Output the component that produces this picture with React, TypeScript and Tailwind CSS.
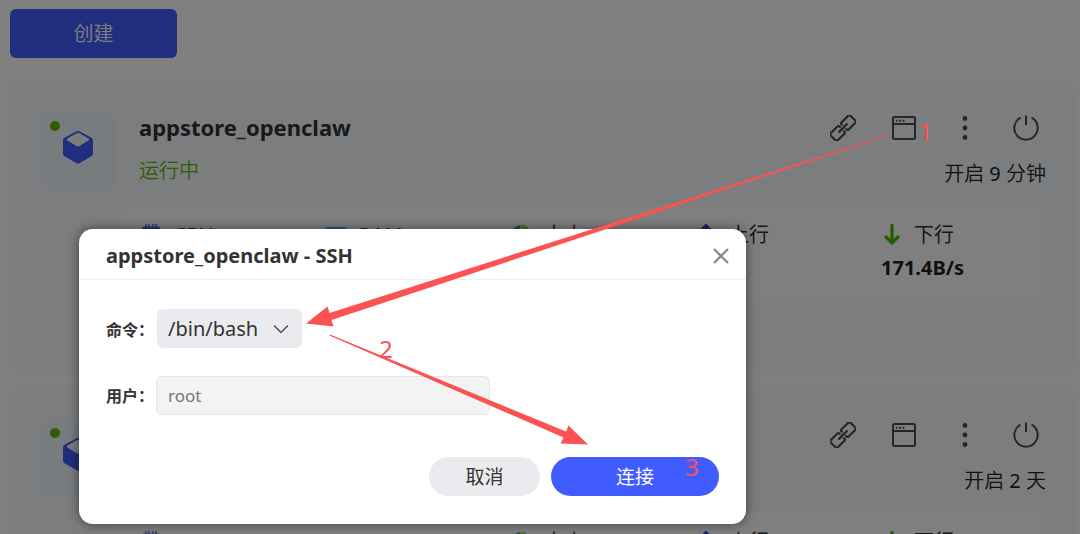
import type { ReactNode } from 'react';

interface Container {
  name: string;
  status: string;
  uptime: number;
  uptimeUnit: string;
  upload: string;
  download: string;
}

const containers: Container[] = [
  {
    name: 'appstore_openclaw',
    status: '运行中',
    uptime: 9,
    uptimeUnit: '分钟',
    upload: '0B/s',
    download: '171.4B/s'
  },
  {
    name: 'appstore_nginx',
    status: '运行中',
    uptime: 2,
    uptimeUnit: '天',
    upload: '0B/s',
    download: '0B/s'
  }
];

function CubeIcon() {
  return (
    <svg viewBox="0 0 30 34" className="h-[34px] w-[30px]" aria-hidden="true">
      <path
        d="M13.600 1.300a3 3 0 0 1 2.800 0l12 6.400A3 3 0 0 1 30 10.300v13.400a3 3 0 0 1-1.600 2.600l-12 6.900a3 3 0 0 1-2.800 0l-12-6.900A3 3 0 0 1 0 23.700V10.300a3 3 0 0 1 1.600-2.600z"
        fill="#405cff"
      />
      <path d="M14 3a2 2 0 0 1 2 0l9.500 5.600c1 .6 1 1.400 0 2L16.500 16a3 3 0 0 1-3 0L4.500 10.600c-1-.6-1-1.400 0-2z" fill="#f6f9ff" />
    </svg>
  );
}

function LinkIcon() {
  return (
    <svg viewBox="0 0 26 26" className="size-[26px]" fill="none" stroke="currentColor" strokeWidth="2.200" strokeLinejoin="round" strokeLinecap="round" aria-hidden="true">
      <g transform="rotate(-45 13 13)">
        <path d="M11.500 10V9.500A1.500 1.500 0 0 0 10 8H.5A1.500 1.500 0 0 0-1 9.500v7A1.500 1.500 0 0 0 .5 18H10a1.500 1.500 0 0 0 1.500-1.500V16" />
        <path d="M14.500 10V9.500A1.500 1.500 0 0 1 16 8h9.500A1.500 1.500 0 0 1 27 9.500v7a1.500 1.500 0 0 1-1.500 1.500H16a1.500 1.500 0 0 1-1.500-1.500V16" />
        <path d="M7.500 13h11" />
      </g>
    </svg>
  );
}

function WindowIcon() {
  return (
    <svg viewBox="0 0 24 24" className="size-6" fill="none" stroke="currentColor" strokeWidth="2" aria-hidden="true">
      <rect x="1" y="1" width="22" height="22" rx="1.500" />
      <path d="M1 8h22" />
      <path d="M3.800 4.700h1.800M7.200 4.700H9M10.600 4.700h1.800" />
    </svg>
  );
}

function MoreIcon() {
  return (
    <svg viewBox="0 0 24 24" className="size-6" fill="currentColor" aria-hidden="true">
      <circle cx="12" cy="2.500" r="2.400" />
      <circle cx="12" cy="12" r="2.400" />
      <circle cx="12" cy="21.500" r="2.400" />
    </svg>
  );
}

function PowerIcon() {
  return (
    <svg viewBox="0 0 26 26" className="size-[26px]" fill="none" stroke="currentColor" strokeWidth="2" aria-hidden="true">
      <path d="M13 .5v9.500M7.500 2.700a11.700 11.700 0 1 0 11 0" />
    </svg>
  );
}

function CpuIcon() {
  return (
    <svg viewBox="0 0 20 22" className="h-[22px] w-5" aria-hidden="true">
      <path d="M5 0v3M8 0v3M12 0v3M15 0v3M5 19v3M8 19v3M12 19v3M15 19v3" stroke="#405cff" strokeWidth="1.200" />
      <rect x="1" y="2.500" width="18" height="17" rx="2" fill="#3f74e8" />
      <rect x="6" y="7" width="8" height="8" fill="#fff" />
    </svg>
  );
}

function RamIcon() {
  return (
    <svg viewBox="0 0 20 22" className="h-[22px] w-5" aria-hidden="true">
      <rect x="0" y="3" width="20" height="15" rx="1" fill="#45b4f5" />
      <path d="M4 8v5M8 8v5M12 8v5M16 8v5" stroke="#fff" strokeWidth="2" />
    </svg>
  );
}

function DiskIcon() {
  return (
    <svg viewBox="0 0 20 22" className="h-[22px] w-5" aria-hidden="true">
      <circle cx="10" cy="11" r="10" fill="#2bb673" />
      <path d="M10 11V1a10 10 0 0 1 9.500 13z" fill="#a5d73c" />
      <path d="M10 1v10l9.500 3" stroke="#fff" fill="none" />
    </svg>
  );
}

function UpIcon() {
  return (
    <svg viewBox="0 0 20 22" className="h-[22px] w-5" fill="none" stroke="#3a3df0" strokeWidth="3.500" strokeLinecap="round" aria-hidden="true">
      <path d="M10 20V2M4 8l6-6 6 6" />
    </svg>
  );
}

function DownIcon() {
  return (
    <svg viewBox="0 0 20 22" className="h-[22px] w-5" fill="none" stroke="#46b800" strokeWidth="3.200" strokeLinecap="round" aria-hidden="true">
      <path d="M11 1.500v17M5 13l6 6 6-6" />
    </svg>
  );
}

function Stat({ icon, label, value }: { icon: ReactNode; label: string; value: string }) {
  return (
    <div className="w-[185px] shrink-0 last:w-auto last:shrink">
      <p className="flex h-7 items-center gap-[13px] text-[20px] text-[#333]">
        {icon}
        {label}
      </p>
      <p className="mt-[3px] text-[20px] leading-8 font-bold text-[#222]">{value}</p>
    </div>
  );
}

function ContainerCard({ item }: { item: Container }) {
  return (
    <section className="rounded-xl bg-[#f6fafe] pt-[31px] pr-[29px] pb-[71px] pl-[30px]">
      <div className="flex">
        <div className="flex h-[76px] w-[76px] shrink-0 rounded-xl bg-[#f1f8ff] pt-2">
          <span className="ml-[10px] size-[10px] rounded-full bg-[#64b800]" />
          <span className="mt-[9px] ml-[3px]">
            <CubeIcon />
          </span>
        </div>
        <div className="ml-[23px] min-w-0 flex-1">
          <h2 className="text-[22px] leading-7 font-bold text-[#333]">{item.name}</h2>
          <p className="mt-4 text-[20px] leading-7 font-[350] text-[#64b800]">{item.status}</p>
        </div>
        <div className="flex flex-col items-end">
          <div className="flex h-[30px] items-center gap-[21px] text-[#4c4c4c]">
            <button type="button" aria-label="链接" className="flex w-10 justify-center">
              <LinkIcon />
            </button>
            <button type="button" aria-label="终端" className="flex w-10 justify-center">
              <WindowIcon />
            </button>
            <button type="button" aria-label="更多" className="flex w-10 justify-center">
              <MoreIcon />
            </button>
            <button type="button" aria-label="电源" className="flex w-10 justify-center">
              <PowerIcon />
            </button>
          </div>
          <p className="mt-[17px] text-[20px] leading-7 font-[350] text-[#222]">
            开启 <span className="font-normal">{item.uptime}</span> {item.uptimeUnit}
          </p>
        </div>
      </div>
      <div className="mt-4 ml-[78px] flex h-[95px] rounded-xl bg-white pt-4 pl-[23px]">
        <Stat icon={<CpuIcon />} label="CPU" value="0.5%" />
        <Stat icon={<RamIcon />} label="RAM" value="412MB" />
        <Stat icon={<DiskIcon />} label="大小" value="1.8GB" />
        <Stat icon={<UpIcon />} label="上行" value={item.upload} />
        <Stat icon={<DownIcon />} label="下行" value={item.download} />
      </div>
    </section>
  );
}

function SshDialog() {
  return (
    <div
      role="dialog"
      aria-labelledby="ssh-title"
      className="absolute top-[229px] left-[79px] w-[667px] rounded-[14px] bg-white text-[#333] shadow-[0_0_12px_rgba(0,0,0,0.5)]"
    >
      <header className="flex h-[51px] items-center justify-between border-b border-[#eee] pt-[3px] pr-[17px] pl-[27px]">
        <h1 id="ssh-title" className="text-[20px] leading-7 font-bold">
          appstore_openclaw - SSH
        </h1>
        <button type="button" aria-label="关闭" className="text-[#888]">
          <svg viewBox="0 0 16 16" className="size-4" fill="none" stroke="currentColor" strokeWidth="2.200" aria-hidden="true">
            <path d="m1 1 14 14M15 1 1 15" />
          </svg>
        </button>
      </header>
      <form className="pt-[29px] pr-[27px] pb-7 pl-[27px]">
        <div className="flex items-center">
          <label htmlFor="command" className="w-[51px] shrink-0 pt-0.5 text-[16px] font-bold">
            命令：
          </label>
          <div className="relative">
            <select id="command" className="h-[39px] w-[145px] appearance-none rounded-md bg-[#ebebef] pl-[11px] text-[20px]">
              <option>/bin/bash</option>
              <option>/bin/sh</option>
            </select>
            <svg
              viewBox="0 0 16 8"
              className="pointer-events-none absolute top-4 right-[13px] h-2 w-4"
              fill="none"
              stroke="#444"
              strokeWidth="1.300"
              aria-hidden="true"
            >
              <path d="m1 .5 7 7 7-7" />
            </svg>
          </div>
        </div>
        <div className="mt-7 flex items-center">
          <label htmlFor="user" className="w-[50px] shrink-0 text-[16px] font-bold">
            用户：
          </label>
          <input
            id="user"
            type="text"
            placeholder="root"
            className="h-[39px] w-[334px] rounded-md border border-[#e6e6e6] bg-[#f3f3f3] px-[11px] text-[17px] placeholder:text-[#777]"
          />
        </div>
        <div className="mt-[42px] flex justify-end gap-[11px] text-[19px]">
          <button type="button" className="h-[39px] w-[111px] rounded-full bg-[#ebebef] pt-0.5">
            取消
          </button>
          <button type="button" className="h-[39px] w-[168px] rounded-full bg-[#405cff] pt-0.5 text-white">
            连接
          </button>
        </div>
      </form>
    </div>
  );
}

// numbered steps drawn over the page
function StepArrows() {
  return (
    <svg viewBox="0 0 1080 534" className="pointer-events-none absolute top-0 left-0 h-[534px] w-[1080px]" fill="#fb5252" aria-hidden="true">
      <path d="M889 134.500 329.500 313 327.500 306.500 306 323.500 333.500 326.500 331.500 320 889 135.500z" />
      <path d="M330 334.500 566 431.500 568.500 425.500 588 444.500 560.500 443.500 563.500 437.500 329.500 335.500z" />
      <g fontSize="24">
        <text x="919" y="141">1</text>
        <text x="379" y="358">2</text>
        <text x="685" y="476">3</text>
      </g>
    </svg>
  );
}

export default function App() {
  return (
    <div className="relative h-screen overflow-hidden bg-white font-['Noto_Sans','Noto_Sans_CJK_SC',sans-serif]">
      <main className="pt-[9px] pr-[5px] pl-[10px]">
        <button type="button" className="h-[49px] w-[167px] rounded-md bg-[#405cff] text-[20px] font-[350] text-white">
          创建
        </button>
        <div className="mt-6 flex flex-col gap-[18px]">
          {containers.map((item) => (
            <ContainerCard key={item.name} item={item} />
          ))}
        </div>
      </main>
      <div className="absolute inset-0 bg-black/50" />
      <SshDialog />
      <StepArrows />
    </div>
  );
}
